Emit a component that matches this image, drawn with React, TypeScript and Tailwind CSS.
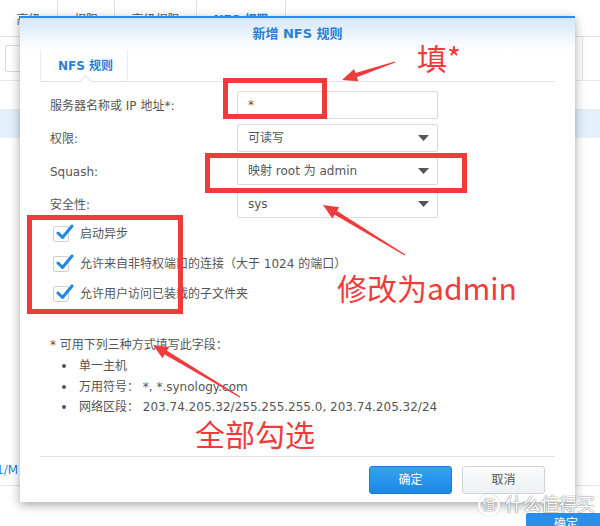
import React from "react";

const font = "font-['DejaVu_Sans','Noto_Sans_CJK_SC',sans-serif]";
const red = "#ef3b3b";

function arrowPoints(x1: number, y1: number, x2: number, y2: number) {
  const dx = x2 - x1;
  const dy = y2 - y1;
  const len = Math.hypot(dx, dy);
  const ux = dx / len;
  const uy = dy / len;
  const nx = -uy;
  const ny = ux;
  const hl = 15;
  const hw = 6.5;
  const sw = 2.2;
  const tw = 0.5;
  const bx = x2 - ux * hl;
  const by = y2 - uy * hl;
  const pts = [
    [x1 + nx * tw, y1 + ny * tw],
    [bx + nx * sw, by + ny * sw],
    [bx + nx * hw, by + ny * hw],
    [x2, y2],
    [bx - nx * hw, by - ny * hw],
    [bx - nx * sw, by - ny * sw],
    [x1 - nx * tw, y1 - ny * tw],
  ];
  return pts.map((p) => p[0].toFixed(1) + "," + p[1].toFixed(1)).join(" ");
}

function Caret() {
  return (
    <svg width="11" height="6" viewBox="0 0 11 6">
      <polygon points="0,0 11,0 5.5,6" fill="#555" />
    </svg>
  );
}

function Field({ label, value, select }: { label: string; value: string; select?: boolean }) {
  return (
    <div className="flex h-[28px] items-center pl-[10px]">
      <div className="w-[187px] pt-[1px] text-[12px] text-[#555]">{label}</div>
      <div className="flex h-[28px] w-[201px] items-center justify-between rounded-[2px] border border-[#d9d9d9] bg-white pl-[10px] pr-[8px] text-[12px] text-[#555]">
        <span>{value}</span>
        {select && <Caret />}
      </div>
    </div>
  );
}

function Check({ label }: { label: string }) {
  return (
    <div className="flex h-[30px] items-center pl-[13px]">
      <div className="relative h-[16px] w-[16px] rounded-[2px] border border-[#cfcfcf] bg-white">
        <svg className="absolute left-[1px] top-[-4px]" width="19" height="19" viewBox="0 0 19 19">
          <path d="M3 10 L7.5 14.5 L17 3" fill="none" stroke="#1f86e6" strokeWidth="3" strokeLinecap="round" strokeLinejoin="round" />
        </svg>
      </div>
      <span className="ml-[11px] text-[12px] text-[#555]">{label}</span>
    </div>
  );
}

function Background() {
  const tabs = [
    { t: "高级", w: "w-[58px]" },
    { t: "权限", w: "w-[57px]" },
    { t: "高级权限", w: "w-[82px]" },
    { t: "NFS 权限", w: "w-[89px]" },
  ];
  return (
    <div className="flex h-full flex-col">
      <div className="flex h-[37px] border-b border-[#e3e3e3]">
        {tabs.map((tab, i) => (
          <div
            key={tab.t}
            className={`${tab.w} flex items-center justify-center border-r border-[#e3e3e3] pt-[4px] text-[12px] ${i === 3 ? "font-bold text-[#2a7fd4]" : "text-[#555]"}`}
          >
            {tab.t}
          </div>
        ))}
      </div>
      <div className="flex h-[43px] items-center justify-between">
        <div className="ml-[5px] h-[27px] w-[40px] rounded-[2px] border border-[#d9d9d9]" />
        <div className="h-[43px] w-[18px] border-l border-[#e3e3e3]" />
      </div>
      <div className="h-[30px] border-y border-[#e8e8e8]" />
      <div className="h-[28px] bg-[#e4f1fc]" />
      <div className="flex-1" />
      <div className="flex h-[30px] items-center text-[12px] text-[#2a7fd4]">
        <span className="-ml-[4px]">1/M</span>
      </div>
      <div className="h-[41px] border-t border-[#e3e3e3]" />
    </div>
  );
}

export default function App() {
  return (
    <div className={`relative h-[526px] w-[600px] overflow-hidden bg-white ${font}`}>
      <Background />

      {/* bottom-right page button */}
      <div className="absolute left-[526px] top-[513px] flex h-[30px] w-[80px] justify-center rounded-[2px] bg-[#2a8fe8] pt-[2px] text-[12px] text-white">
        确定
      </div>

      {/* dialog */}
      <div className="absolute left-[20px] top-[16px] flex h-[486px] w-[555px] flex-col border-t-2 border-[#2e8ae6] bg-white shadow-[0_3px_10px_rgba(0,0,0,0.35)]">
        <div className="flex h-[32px] items-center justify-center bg-linear-to-b from-[#d5e7f8] to-white text-[13px] font-bold text-[#2a7fd4]">
          新增 NFS 规则
        </div>
        <div className="flex flex-1 flex-col px-[20px]">
          <div className="relative flex h-[32px] border-b border-[#e3e3e3]">
            <div className="flex w-[88px] items-center border-x border-[#ececec] pl-[17px] text-[12px] font-bold text-[#2a7fd4]">
              NFS 规则
            </div>
            <div className="absolute bottom-[-5px] left-[41px] h-[9px] w-[9px] rotate-45 border-l border-t border-[#e3e3e3] bg-white" />
          </div>

          <div className="mt-[9px] flex flex-col gap-[5px]">
            <Field label="服务器名称或 IP 地址*:" value="*" />
            <Field label="权限:" value="可读写" select />
            <Field label="Squash:" value="映射 root 为 admin" select />
            <Field label="安全性:" value="sys" select />
          </div>

          <div className="mt-[1px] flex flex-col">
            <Check label="启动异步" />
            <Check label="允许来自非特权端口的连接（大于 1024 的端口）" />
            <Check label="允许用户访问已装载的子文件夹" />
          </div>

          <div className="mt-[26px] pl-[10px] text-[12px] text-[#555]">
            <div className="flex h-[20px] items-center">* 可用下列三种方式填写此字段：</div>
            {["单一主机", "万用符号： *, *.synology.com", "网络区段： 203.74.205.32/255.255.255.0, 203.74.205.32/24"].map((t) => (
              <div key={t} className="flex h-[20.5px] items-center pt-[2px]">
                <span className="ml-[12px] h-[4px] w-[4px] rounded-full bg-[#555]" />
                <span className="ml-[13px]">{t}</span>
              </div>
            ))}
          </div>

          <div className="mt-auto flex h-[46px] items-center justify-end gap-[10px] border-t border-[#e3e3e3] pr-[10px]">
            <button className="h-[28px] w-[83px] rounded-[3px] border border-[#1a7bd6] bg-linear-to-b from-[#35a2f4] to-[#1c87e4] text-[12px] text-white">
              确定
            </button>
            <button className="h-[28px] w-[83px] rounded-[3px] border border-[#d0d4d9] bg-linear-to-b from-[#fbfbfc] to-[#eef0f3] text-[12px] text-[#555]">
              取消
            </button>
          </div>
        </div>
      </div>

      {/* watermark */}
      <div className="absolute left-[478px] top-[494px] flex items-center gap-[5px] text-white [text-shadow:0_0_1px_#777,0_0_1px_#777]">
        <div className="flex h-[22px] w-[22px] items-center justify-center rounded-full border-2 border-white text-[13px] shadow-[0_0_1px_#777]">
          值
        </div>
        <span className="text-[18px] leading-none">什么值得买</span>
      </div>

      {/* annotations */}
      <svg className="pointer-events-none absolute left-0 top-0" width="600" height="526">
        <rect x="225.5" y="80.5" width="99" height="36" fill="none" stroke={red} strokeWidth="5" />
        <rect x="207.5" y="155.5" width="257" height="35" fill="none" stroke={red} strokeWidth="5" />
        <rect x="29.5" y="217.5" width="151" height="94" fill="none" stroke={red} strokeWidth="5" />
        <polygon points={arrowPoints(395, 62, 342, 80)} fill={red} />
        <polygon points={arrowPoints(405, 255, 323, 205)} fill={red} />
        <polygon points={arrowPoints(240, 397, 153, 345)} fill={red} />
      </svg>
      <span className="absolute left-[417px] top-[42px] font-['Noto_Sans_CJK_SC',sans-serif] text-[30px] leading-none text-[#ef3b3b]">
        填*
      </span>
      <span className="absolute left-[337px] top-[272px] font-['Noto_Sans_CJK_SC',sans-serif] text-[30px] leading-none text-[#ef3b3b]">
        修改为admin
      </span>
      <span className="absolute left-[195px] top-[418px] font-['Noto_Sans_CJK_SC',sans-serif] text-[30px] leading-none text-[#ef3b3b]">
        全部勾选
      </span>
    </div>
  );
}
